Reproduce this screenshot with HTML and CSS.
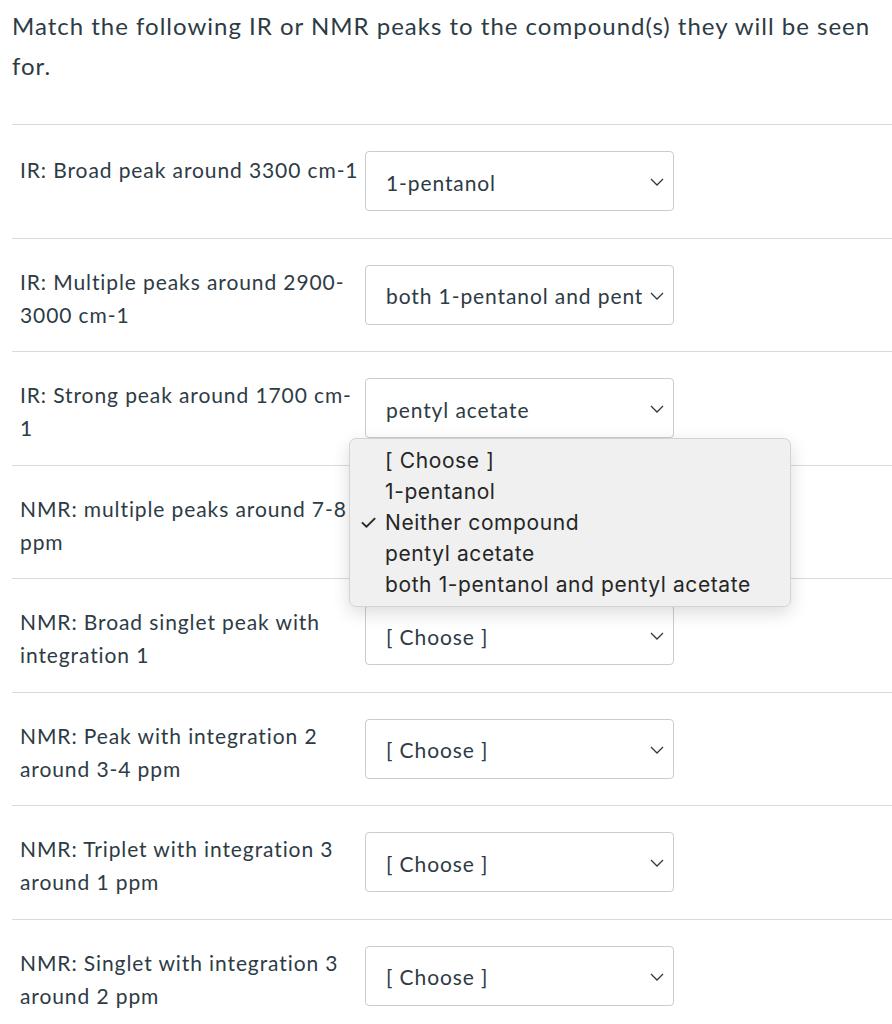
FILE: index.html
```html
<!DOCTYPE html>
<html lang="en">
<head>
    <meta charset="UTF-8">
    <title>Matching Question</title>
    <link rel="stylesheet" href="styles.css">
</head>
<body>
    <div class="question">
        <p class="prompt">Match the following IR or NMR peaks to the compound(s) they will be seen for.</p>

        <div class="answers">
            <div class="answer-row">
                <div class="answer-label">IR: Broad peak around 3300 cm-1</div>
                <div class="select-wrap">
                    <div class="select"><span class="value">1-pentanol</span><svg class="chevron" width="14" height="8" viewBox="0 0 14 8"><path d="M1 1l6 6 6-6"/></svg></div>
                </div>
            </div>
            <div class="answer-row">
                <div class="answer-label">IR: Multiple peaks around 2900-3000 cm-1</div>
                <div class="select-wrap">
                    <div class="select"><span class="value">both 1-pentanol and pentyl acetate</span><svg class="chevron" width="14" height="8" viewBox="0 0 14 8"><path d="M1 1l6 6 6-6"/></svg></div>
                </div>
            </div>
            <div class="answer-row">
                <div class="answer-label">IR: Strong peak around 1700 cm-1</div>
                <div class="select-wrap">
                    <div class="select"><span class="value">pentyl acetate</span><svg class="chevron" width="14" height="8" viewBox="0 0 14 8"><path d="M1 1l6 6 6-6"/></svg></div>
                </div>
            </div>
            <div class="answer-row">
                <div class="answer-label">NMR: multiple peaks around 7-8 ppm</div>
                <div class="select-wrap">
                    <div class="select"><span class="value">Neither compound</span><svg class="chevron" width="14" height="8" viewBox="0 0 14 8"><path d="M1 1l6 6 6-6"/></svg></div>
                    <!-- open native menu, checked item sits over the select -->
                    <ul class="menu">
                        <li>[ Choose ]</li>
                        <li>1-pentanol</li>
                        <li class="checked">Neither compound</li>
                        <li>pentyl acetate</li>
                        <li>both 1-pentanol and pentyl acetate</li>
                    </ul>
                </div>
            </div>
            <div class="answer-row">
                <div class="answer-label">NMR: Broad singlet peak with integration 1</div>
                <div class="select-wrap">
                    <div class="select"><span class="value">[ Choose ]</span><svg class="chevron" width="14" height="8" viewBox="0 0 14 8"><path d="M1 1l6 6 6-6"/></svg></div>
                </div>
            </div>
            <div class="answer-row">
                <div class="answer-label">NMR: Peak with integration 2 around 3-4 ppm</div>
                <div class="select-wrap">
                    <div class="select"><span class="value">[ Choose ]</span><svg class="chevron" width="14" height="8" viewBox="0 0 14 8"><path d="M1 1l6 6 6-6"/></svg></div>
                </div>
            </div>
            <div class="answer-row">
                <div class="answer-label">NMR: Triplet with integration 3 around 1 ppm</div>
                <div class="select-wrap">
                    <div class="select"><span class="value">[ Choose ]</span><svg class="chevron" width="14" height="8" viewBox="0 0 14 8"><path d="M1 1l6 6 6-6"/></svg></div>
                </div>
            </div>
            <div class="answer-row">
                <div class="answer-label">NMR: Singlet with integration 3 around 2 ppm</div>
                <div class="select-wrap">
                    <div class="select"><span class="value">[ Choose ]</span><svg class="chevron" width="14" height="8" viewBox="0 0 14 8"><path d="M1 1l6 6 6-6"/></svg></div>
                </div>
            </div>
        </div>
    </div>
</body>
</html>
```

FILE: styles.css
```css
body { margin: 0; font-family: Lato, "Open Sans", sans-serif; color: #2d3b45; background: #fff; }
.question { padding-left: 12px; }
.prompt { font-size: 24px; line-height: 40px; letter-spacing: 1px; margin: 6px 0 38px; padding-right: 8px; }
.answer-row { display: grid; grid-template-columns: 345px 309px; grid-template-rows: 60px; border-top: 1px solid #d7dade; padding: 26px 0 26.5px 8px; }
.answer-label { font-size: 21px; line-height: 33px; letter-spacing: 0.9px; padding-right: 4px; }
.answer-row:first-child .answer-label { padding-top: 2px; }
.select-wrap { position: relative; }
.select { display: flex; align-items: center; height: 60px; box-sizing: border-box; border: 1px solid #c7cdd1; border-radius: 4px; padding: 2px 9px 0 20px; background: #fff; font-size: 21px; letter-spacing: 0.9px; }
.select .value { flex: 1; white-space: nowrap; overflow: hidden; }
.chevron { flex: none; margin-left: 8px; fill: none; stroke: #2d3b45; stroke-width: 1.3; }
.menu { position: absolute; left: -16px; top: -54px; width: 442px; box-sizing: border-box; margin: 0; padding: 6px 0 6px 35px; list-style: none; background: #f0f0f0; border: 1px solid #d3d3d3; border-radius: 7px; box-shadow: 0 6px 18px rgba(0,0,0,0.14); font-family: Inter, "Noto Sans", sans-serif; font-size: 21px; line-height: 31px; letter-spacing: 0.6px; color: #262626; z-index: 2; }
.menu li { position: relative; }
.menu li.checked::before { content: "\2713"; position: absolute; left: -26px; font-size: 21px; letter-spacing: 0; }
```
